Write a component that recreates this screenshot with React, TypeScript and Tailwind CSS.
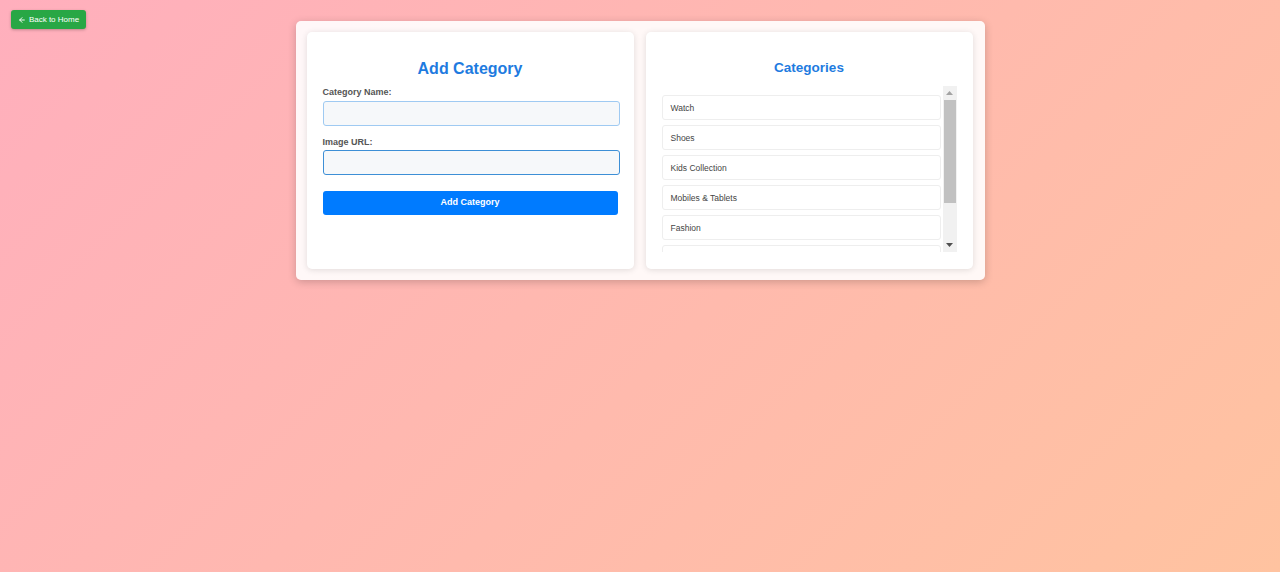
import { ArrowLeft } from 'lucide-react';

const categories = ['Watch', 'Shoes', 'Kids Collection', 'Mobiles & Tablets', 'Fashion', 'Electronics'];

const App = () => {
  return (
    <div
      className="min-h-[572px] w-full bg-[linear-gradient(135deg,#ffafbd,#ffc3a0)] pt-[10px] text-[#333]"
      style={{ fontFamily: '"Liberation Sans", Arial, sans-serif' }}
    >
      <div className="px-[11px]">
        <button className="flex h-[19px] w-[75px] items-center justify-center gap-[3px] rounded-[3px] bg-[#28a745] text-[8px] font-medium text-white shadow-[0_1px_3px_rgba(0,0,0,0.25)]">
          <ArrowLeft size={8} strokeWidth={2.75} />
          Back to Home
        </button>
      </div>

      <div className="mx-auto -mt-[8px] flex w-[689px] gap-[12px] rounded-[5px] bg-white/90 p-[11px] shadow-[0_2px_8px_rgba(0,0,0,0.2)]">
        {/* add category form */}
        <div className="h-[237px] w-[327px] rounded-[5px] bg-white px-[16px] pt-[27px] shadow-[0_1px_6px_rgba(0,0,0,0.12)]">
          <h2 className="text-center text-[16px] font-bold leading-[19px] text-[#1e7be0]">Add Category</h2>
          <label className="mt-[9px] block text-[9px] font-bold leading-[10px] text-[#555]">Category Name:</label>
          <input className="mt-[4px] block h-[25px] w-[297px] rounded-[3px] border border-[#9fcaf2] bg-[#f6f8fa] outline-none" />
          <label className="mt-[11px] block text-[9px] font-bold leading-[10px] text-[#555]">Image URL:</label>
          <input className="mt-[3px] block h-[25px] w-[297px] rounded-[3px] border border-[#3d8fd6] bg-[#f6f8fa] outline-none" />
          <button className="mt-[16px] block h-[24px] w-[295px] rounded-[3px] bg-[#007bff] text-[9px] font-bold text-white">
            Add Category
          </button>
        </div>

        {/* category list */}
        <div className="h-[237px] w-[327px] rounded-[5px] bg-white px-[16px] pt-[27px] shadow-[0_1px_6px_rgba(0,0,0,0.12)]">
          <h2 className="text-center text-[13.5px] font-bold leading-[17px] text-[#1e7be0]">Categories</h2>
          <div className="mt-[10px] flex h-[166px]">
            <div className="flex-1 overflow-hidden pt-[9px] pr-[2px]">
              <div className="flex flex-col gap-[5px]">
                {categories.map((c) => (
                  <div
                    key={c}
                    className="flex h-[25px] shrink-0 items-center rounded-[3px] border border-[#eee] px-[8px] pt-[1px] text-[8.5px] text-[#444]"
                  >
                    {c}
                  </div>
                ))}
              </div>
            </div>
            {/* scrollbar */}
            <div className="flex w-[14px] flex-col bg-[#f1f1f1]">
              <div className="flex h-[14px] items-center justify-center">
                <svg width="7" height="4" viewBox="0 0 7 4">
                  <path d="M3.5 0 L7 4 L0 4 Z" fill="#a3a3a3" />
                </svg>
              </div>
              <div className="mx-[1px] h-[103px] bg-[#c1c1c1]" />
              <div className="flex-1" />
              <div className="flex h-[14px] items-center justify-center">
                <svg width="7" height="4" viewBox="0 0 7 4">
                  <path d="M0 0 L7 0 L3.5 4 Z" fill="#505050" />
                </svg>
              </div>
            </div>
          </div>
        </div>
      </div>
    </div>
  );
};

export default App;
